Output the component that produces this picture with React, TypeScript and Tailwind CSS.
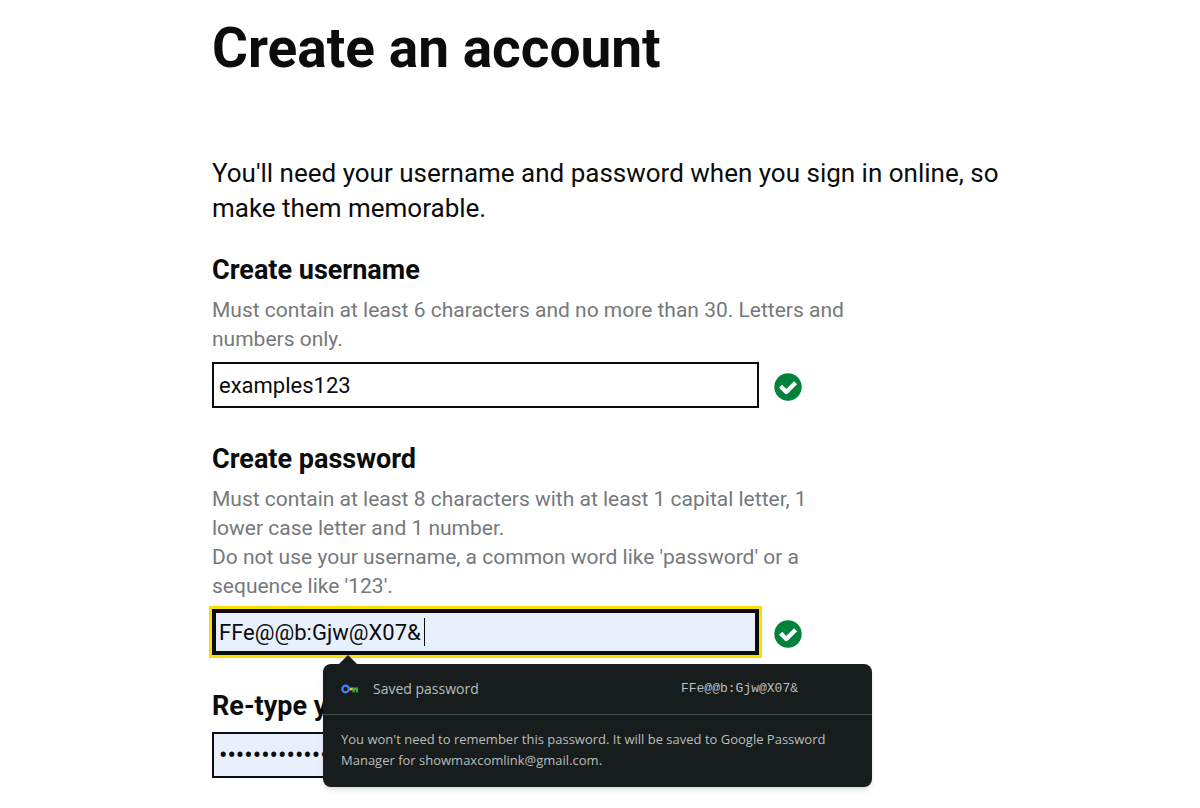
import React, { useState } from 'react';

interface FieldProps {
  id: string;
  label: string;
  hint?: React.ReactNode;
  valid?: boolean;
  children: React.ReactNode;
}

function ValidTick() {
  return (
    <svg viewBox="0 0 28 28" className="mt-1 h-7 w-7 shrink-0" role="img" aria-label="Valid">
      <circle cx="14" cy="14" r="13.7" fill="#00823b" />
      <path
        d="M6.6 13.2 12.3 19 21.6 9.8"
        fill="none"
        stroke="#fff"
        strokeWidth="4.4"
        strokeLinejoin="round"
      />
    </svg>
  );
}

function KeyIcon() {
  return (
    <svg viewBox="0 0 18 10" className="h-[10px] w-[18px] shrink-0" aria-hidden="true">
      <path d="M7 3.6h5v2.8H7z" fill="#fbbc04" />
      <path d="M11.5 3.6H17v4.8h-2V6.6h-1.2v1.8h-2.3z" fill="#34a853" />
      <path d="M7.2 3.6h1.6v2.8H7.2z" fill="#ea4335" />
      <circle cx="4.6" cy="5" r="3.3" fill="none" stroke="#4285f4" strokeWidth="2.2" />
    </svg>
  );
}

function Field({ id, label, hint, valid, children }: FieldProps) {
  return (
    <div>
      <label htmlFor={id} className="mb-[10px] block text-[27px] leading-8 font-bold">
        {label}
      </label>
      {hint && (
        <p id={`${id}-hint`} className="mb-2 max-w-[650px] text-[21px] leading-[29px] text-[#75797c]">
          {hint}
        </p>
      )}
      <div className="flex items-center gap-[15px]">
        <div className="relative w-full max-w-[547px]">{children}</div>
        {valid && <ValidTick />}
      </div>
    </div>
  );
}

// Browser bubble shown under the password box
function SavedPasswordPopup({ password }: { password: string }) {
  return (
    <div
      role="status"
      className="absolute top-[55px] left-[111px] z-10 w-[549px] rounded-lg bg-[#171d1d] font-['Open_Sans',sans-serif] text-[13px] text-[#b9bebe] shadow-md"
    >
      <svg viewBox="0 0 20 10" className="absolute -top-[9px] left-[15px] h-[10px] w-5" aria-hidden="true">
        <path d="M0 10 10 0 20 10z" fill="#171d1d" />
      </svg>
      <div className="flex h-[51px] items-center border-b border-[#454b4b] px-[18px]">
        <KeyIcon />
        <span className="ml-[14px] text-sm">Saved password</span>
        <span className="mr-14 ml-auto font-['Liberation_Mono',monospace]">{password}</span>
      </div>
      <p className="px-[18px] pt-[14px] pb-4 leading-[21px]">
        You won't need to remember this password. It will be saved to Google Password Manager for
        showmaxcomlink@gmail.com.
      </p>
    </div>
  );
}

export default function App() {
  const [username, setUsername] = useState('examples123');
  const [password, setPassword] = useState('FFe@@b:Gjw@X07&');
  const [confirm, setConfirm] = useState('FFe@@b:Gjw@X07&');

  return (
    <main className="min-h-screen bg-white px-6 pt-4 pb-7 font-['Roboto',sans-serif] text-[#0b0c0c] lg:pl-[212px]">
      <h1 className="text-[55px] leading-[64px] font-bold">Create an account</h1>
      <p className="mt-[76px] max-w-[800px] text-[26px] leading-[35px]">
        You'll need your username and password when you sign in online, so make them memorable.
      </p>

      <form className="mt-7 flex flex-col gap-[35px]" onSubmit={(e) => e.preventDefault()}>
        <Field
          id="username"
          label="Create username"
          hint="Must contain at least 6 characters and no more than 30. Letters and numbers only."
          valid
        >
          <input
            id="username"
            type="text"
            aria-describedby="username-hint"
            value={username}
            onChange={(e) => setUsername(e.target.value)}
            className="block h-[46px] w-full border-2 border-[#0b0c0c] bg-white px-[5px] text-[22px] outline-none"
          />
        </Field>

        <Field
          id="password"
          label="Create password"
          hint={
            <>
              Must contain at least 8 characters with at least 1 capital letter, 1 lower case letter and 1 number.
              <br />
              Do not use your username, a common word like 'password' or a sequence like '123'.
            </>
          }
          valid
        >
          <input
            id="password"
            type="text"
            aria-describedby="password-hint"
            value={password}
            onChange={(e) => setPassword(e.target.value)}
            className="block h-[46px] w-full border-4 border-[#0b0c0c] bg-[#e8f0fe] px-[3px] text-[22px] caret-transparent outline-3 outline-[#ffdd00]"
          />
          <span className="absolute top-[9px] left-[212px] h-7 w-px bg-[#0b0c0c]" />
          <SavedPasswordPopup password={password} />
        </Field>

        <Field id="confirm" label="Re-type your password">
          <input
            id="confirm"
            type="password"
            value={confirm}
            onChange={(e) => setConfirm(e.target.value)}
            className="block h-[46px] w-full border-2 border-[#0b0c0c] bg-[#e8f0fe] px-[5px] text-[25px] outline-none"
          />
        </Field>
      </form>
    </main>
  );
}
